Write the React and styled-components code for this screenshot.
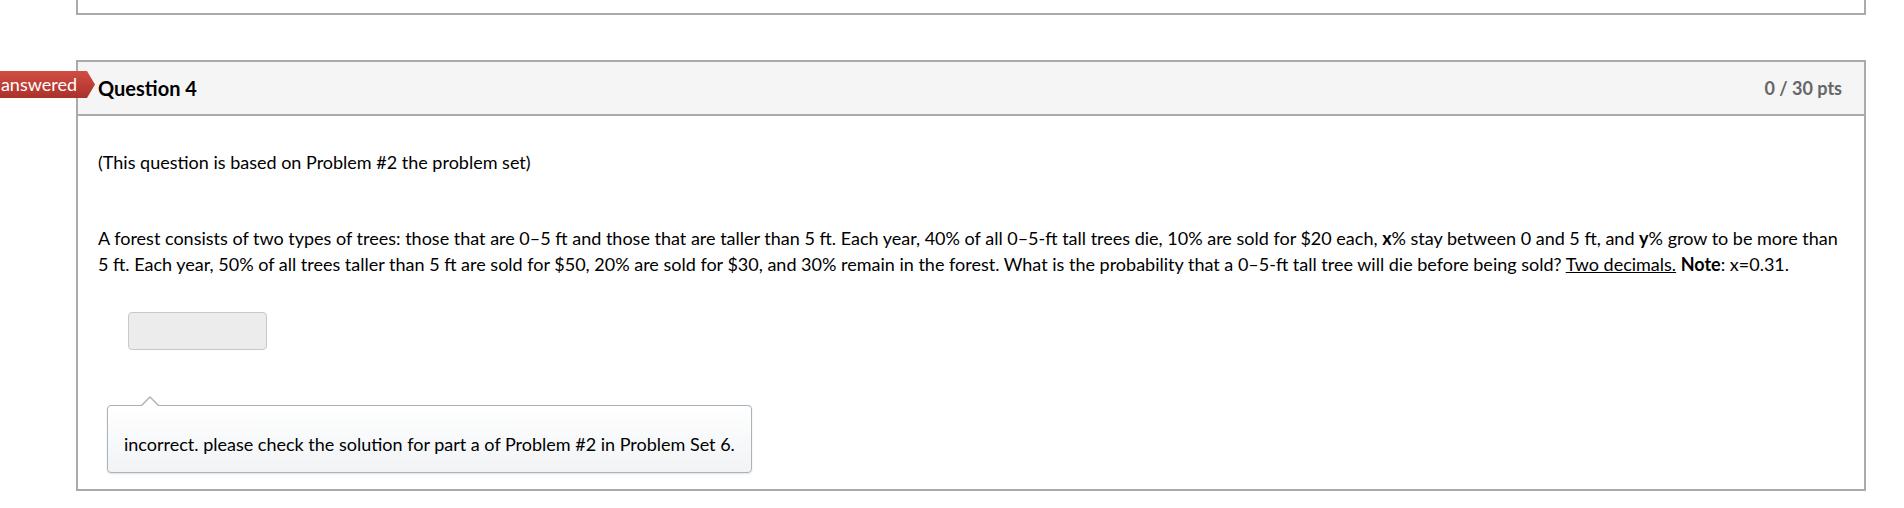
import styled, { createGlobalStyle } from "styled-components";

const GlobalStyle = createGlobalStyle`
  body {
    margin: 0;
    background: #fff;
    font-family: Lato, "Open Sans", sans-serif;
    color: #000;
  }
`;

const Page = styled.div`
  padding: 0 38px 0 76px;
`;

const PrevCard = styled.div`
  height: 13px;
  border: 2px solid #aaa;
  border-top: none;
`;

const QuestionCard = styled.div`
  position: relative;
  margin-top: 45px;
  border: 2px solid #aaa;
`;

const Flag = styled.span`
  position: absolute;
  top: 9px;
  left: -78px;
  width: 95px;
  height: 27px;
  box-sizing: border-box;
  padding-right: 18px;
  text-align: right;
  overflow: hidden;
  white-space: nowrap;
  line-height: 26px;
  font-size: 18px;
  color: #fff;
  background: linear-gradient(#d24d42, #a9322b);
  clip-path: polygon(0 0, 87px 0, 95px 50%, 87px 100%, 0 100%);
`;

const Header = styled.div`
  height: 52px;
  display: flex;
  align-items: center;
  justify-content: space-between;
  padding: 0 22px 0 20px;
  background: #f5f5f5;
  border-bottom: 2px solid #aaa;
`;

const Title = styled.h2`
  margin: 0;
  font-size: 20px;
  font-weight: 700;
  color: #000;
`;

const Points = styled.span`
  font-size: 18px;
  font-weight: 700;
  color: #666;
`;

const Body = styled.div`
  padding: 34px 20px 16px 20px;
  font-size: 18px;
  line-height: 25px;
`;

const Para = styled.p`
  margin: 0 0 ${(p) => p.$gap || 0}px 0;
  line-height: ${(p) => p.$lh || 25}px;
`;

const Underlined = styled.span`
  text-decoration: underline;
`;

const AnswerInput = styled.input`
  display: block;
  width: 139px;
  height: 38px;
  box-sizing: border-box;
  margin: 35px 0 0 30px;
  border: 1px solid #c8c8c8;
  border-radius: 4px;
  background: #ececec;
`;

const Feedback = styled.div`
  position: relative;
  width: fit-content;
  white-space: nowrap;
  margin: 55px 0 0 9px;
  padding: 26px 16px 15px 16px;
  border: 1px solid #a9b3bc;
  border-radius: 4px;
  background: linear-gradient(#fff, #f1f3f5);
  box-shadow: 0 1px 2px rgba(0, 0, 0, 0.12);
  &::before,
  &::after {
    content: "";
    position: absolute;
    left: 33px;
    border-style: solid;
    border-color: transparent;
  }
  &::before {
    top: -10px;
    border-width: 0 9px 9px 9px;
    border-bottom-color: #a9b3bc;
  }
  &::after {
    top: -8px;
    left: 34px;
    border-width: 0 8px 8px 8px;
    border-bottom-color: #fff;
  }
`;

export default function App() {
  return (
    <>
      <GlobalStyle />
      <Page>
        <PrevCard />
        <QuestionCard>
          <Flag>answered</Flag>
          <Header>
            <Title>Question 4</Title>
            <Points>0 / 30 pts</Points>
          </Header>
          <Body>
            <Para $gap={50}>(This question is based on Problem #2 the problem set)</Para>
            <Para $lh={26}>
              A forest consists of two types of trees: those that are 0–5 ft and those that are taller than 5 ft.
              Each year, 40% of all 0–5-ft tall trees die, 10% are sold for $20 each, <b>x</b>% stay between 0 and 5 ft,
              and <b>y</b>% grow to be more than 5 ft. Each year, 50% of all trees taller than 5 ft are sold for $50,
              20% are sold for $30, and 30% remain in the forest. What is the probability that a 0–5-ft tall tree
              will die before being sold? <Underlined>Two decimals.</Underlined> <b>Note</b>: x=0.31.
            </Para>
            <AnswerInput type="text" readOnly />
            <Feedback>incorrect. please check the solution for part a of Problem #2 in Problem Set 6.</Feedback>
          </Body>
        </QuestionCard>
      </Page>
    </>
  );
}
